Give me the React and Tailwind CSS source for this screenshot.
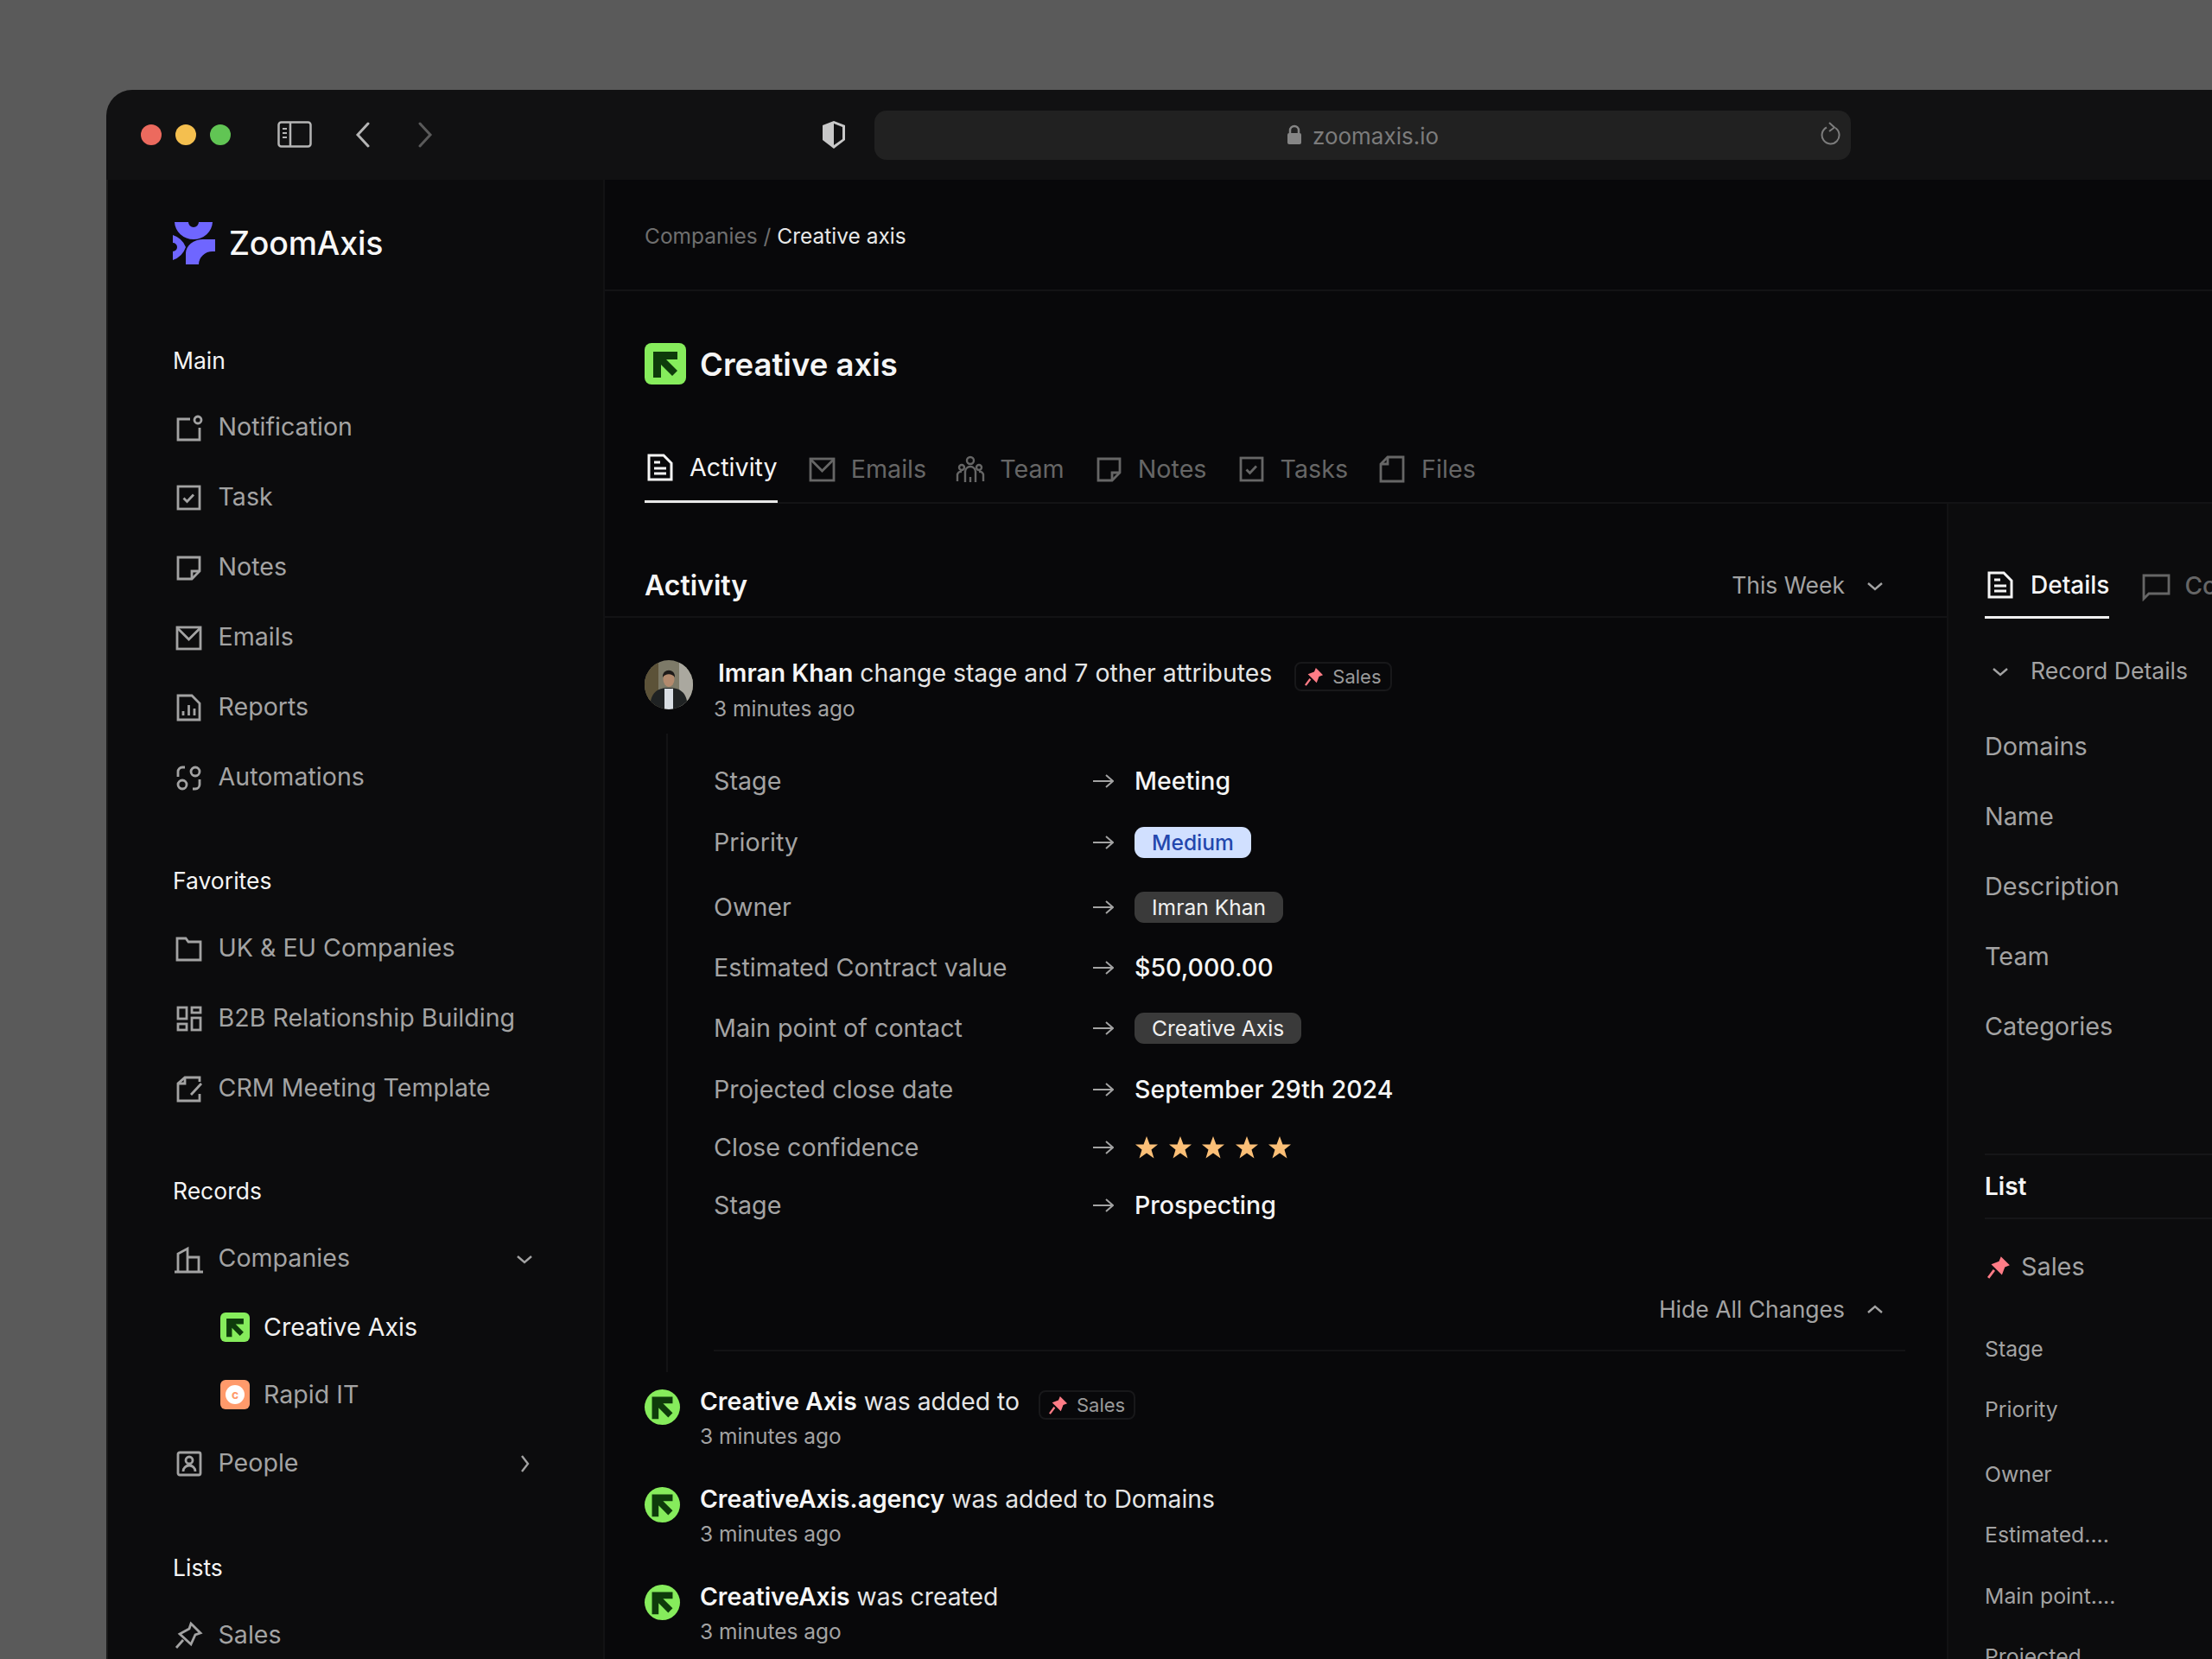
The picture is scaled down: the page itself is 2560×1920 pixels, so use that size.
import React from 'react'

const Svg = ({ size = 36, vb = 36, className = '', sw = 2.8, children }) => (
  <svg width={size} height={size} viewBox={`0 0 ${vb} ${vb}`} fill="none" stroke="currentColor" strokeWidth={sw} className={`shrink-0 ${className}`}>
    {children}
  </svg>
)

const NotificationIcon = () => <Svg><path d="M20 8H6V32H31V18" /><circle cx="29" cy="9" r="4" /></Svg>
const TaskIcon = ({ className }) => <Svg className={className}><rect x="6" y="5" width="25" height="26" /><path d="M12.5 18.5L16.5 22.5L24 14.5" /></Svg>
const NotesIcon = ({ className }) => <Svg className={className}><path d="M6 6H31V22L22 31H6Z" /><path d="M31 22H22V31" /></Svg>
const MailIcon = ({ className }) => <Svg className={className}><rect x="5" y="6" width="27" height="25" /><path d="M5.5 7L18.5 20L31.5 7" /></Svg>
const ReportsIcon = () => <Svg><path d="M6 4H22L31 13V32H6Z" /><path d="M12 27V22M18.500 27V15M25 27V19" /></Svg>
const AutomationIcon = () => <Svg><circle cx="26" cy="11" r="5" /><circle cx="11" cy="26" r="5" /><path d="M6 17V11A5 5 0 0 1 11 6H14" /><path d="M31 20V26A5 5 0 0 1 26 31H23" /></Svg>
const FolderIcon = () => <Svg><path d="M5 6H15L18 10H32V31H5Z" /></Svg>
const BoardIcon = () => <Svg><rect x="6" y="5" width="10" height="13" /><rect x="22" y="5" width="10" height="6" /><rect x="6" y="24" width="10" height="7" /><rect x="22" y="17" width="10" height="14" /></Svg>
const TemplateIcon = () => <Svg><path d="M31 10V5H14L6 12V32H31V24" /><path d="M14 5V12H6" /><path d="M21 25L33 12" /></Svg>
const BuildingIcon = () => <Svg><path d="M6 33V12L17 6V33" /><path d="M17 16H30V33" /><path d="M2 33H35" /></Svg>
const PeopleIcon = () => <Svg><rect x="6" y="5" width="26" height="26" rx="2" /><circle cx="19" cy="14" r="4" /><path d="M12 27A7 7 0 0 1 26 27" /></Svg>
const PinIcon = () => <Svg><path d="M21 4L32 15L26 17L21 28L8 16L19 10Z" /><path d="M12 23L4 32" /></Svg>
const DocIcon = ({ className }) => <Svg className={className} sw={3}><path d="M5 4H22L31 13V32H5Z" /><path d="M11 12H18M11 19H25M11 25H25" /></Svg>
const TeamIcon = ({ className }) => (
  <Svg className={className} sw={2.4}>
    <circle cx="18" cy="8" r="4" /><circle cx="8" cy="16" r="3" /><circle cx="28" cy="16" r="3" />
    <path d="M12 33V21A6 6 0 0 1 24 21V33" /><path d="M3 32V24A4.500 4.500 0 0 1 8 21" /><path d="M33 32V24A4.500 4.500 0 0 0 28 21" /><path d="M18 27V33" />
  </Svg>
)
const FileIcon = ({ className }) => <Svg className={className}><path d="M13 4H31V32H5V12Z" /><path d="M13 4V12H5" /></Svg>
const ChatIcon = ({ className }) => <Svg className={className}><path d="M4 6H33V27H10L4 33Z" /></Svg>

const ChevronDown = ({ up, className = 'text-[#a3a3a3]' }) => (
  <Svg size={22} vb={22} sw={2.4} className={className}><path d={up ? 'M3 14L11 7L19 14' : 'M3 8L11 15L19 8'} /></Svg>
)
const ChevronRight = () => <Svg size={22} vb={22} sw={2.4} className="text-[#a3a3a3]"><path d="M8 2L15 11L8 20" /></Svg>
const Arrow = () => (
  <Svg size={24} vb={24} sw={2} className="text-[#a3a3a3]"><path d="M0 12H23M15 5L23 12L15 19" /></Svg>
)
const Star = () => (
  <svg width="28" height="28" viewBox="0 0 28 28" className="shrink-0 fill-[#fbbf77]">
    <polygon points="14,1 17.500,10.500 27,10.500 19.500,16.500 22.500,26.500 14,20.500 5.500,26.500 8.500,16.500 1,10.500 10.500,10.500" />
  </svg>
)
const RedPin = ({ size = 22 }) => (
  <svg width={size} height={size} viewBox="0 0 24 24" className="shrink-0 fill-[#ff7c86]">
    <path d="M14 1L23 10L18 12L15 20L4 9L12 6Z" />
    <path d="M7 15L1 23" stroke="#ff7c86" strokeWidth="2.500" fill="none" />
  </svg>
)

const AxisMark = ({ size = 24 }) => (
  <svg width={size} height={size} viewBox="0 0 24 24" className="fill-[#0e3b0b]">
    <polygon points="5,5 19,5 19,9.500 12.500,9.500 19,16 16,19 9.500,12.500 9.500,20 5,20" />
  </svg>
)

const AxisSquare = ({ size, rounded }) => (
  <div className={`flex items-center justify-center bg-[#86ec5c] shrink-0 ${rounded}`} style={{ width: size, height: size }}>
    <AxisMark size={size} />
  </div>
)

const AxisCircle = () => (
  <div className="flex items-center justify-center w-[41px] h-[41px] rounded-full bg-[#86ec5c] shrink-0">
    <AxisMark size={41} />
  </div>
)

const Logo = () => (
  <svg width="49" height="49" viewBox="0 0 49 49" className="shrink-0 fill-[#6f66ff]">
    <path d="M2 0H18A6 6 0 0 0 30 0H46A22 21 0 0 1 24 20A22 21 0 0 1 2 0Z" />
    <path d="M49 20V34H46A16 15 0 0 0 30 49H15V36A20 16 0 0 1 35 20Z" />
    <path d="M0 15A24 24 0 0 1 15 29A24 24 0 0 1 0 44V34A5 5 0 0 0 0 24Z" />
  </svg>
)

const SectionLabel = ({ className, children }) => (
  <div className={`h-[40px] flex items-center text-[26.500px] text-[#f5f5f5] ${className}`}>{children}</div>
)

const NavItem = ({ icon: Icon, label, right }) => (
  <div className="h-[81px] flex items-center gap-[16.500px] text-[28.600px] text-[#a3a3a3]">
    <Icon />
    <span>{label}</span>
    {right && <span className="ml-auto flex">{right}</span>}
  </div>
)

const mainNav = [
  { icon: NotificationIcon, label: 'Notification' },
  { icon: TaskIcon, label: 'Task' },
  { icon: NotesIcon, label: 'Notes' },
  { icon: MailIcon, label: 'Emails' },
  { icon: ReportsIcon, label: 'Reports' },
  { icon: AutomationIcon, label: 'Automations' },
]

const favorites = [
  { icon: FolderIcon, label: 'UK & EU Companies' },
  { icon: BoardIcon, label: 'B2B Relationship Building' },
  { icon: TemplateIcon, label: 'CRM Meeting Template' },
]

const Sidebar = () => (
  <aside className="w-[577px] shrink-0 bg-[#0c0c0d] border-l-2 border-r-2 border-l-[#1a1a1a] border-r-[#121214] pl-[75px] pr-[80px]">
    <div className="flex items-center gap-[16px] h-[49px] mt-[49px]">
      <Logo />
      <span className="text-[37.500px] font-medium text-[#f7f7f7] tracking-[-0.2px] mt-[1px]">ZoomAxis</span>
    </div>

    <SectionLabel className="mt-[92px]">Main</SectionLabel>
    <div className="mt-[16px]">
      {mainNav.map((item) => <NavItem key={item.label} {...item} />)}
    </div>

    <SectionLabel className="mt-[60px]">Favorites</SectionLabel>
    <div className="mt-[17px]">
      {favorites.map((item) => <NavItem key={item.label} {...item} />)}
    </div>

    <SectionLabel className="mt-[59px]">Records</SectionLabel>
    <div className="mt-[17px]">
      <NavItem icon={BuildingIcon} label="Companies" right={<ChevronDown />} />
      <div className="h-[78px] flex items-center gap-[16px] pl-[55px] text-[28.600px] text-[#f0f0f0]">
        <AxisSquare size={34} rounded="rounded-[6px]" />
        Creative Axis
      </div>
      <div className="h-[78px] flex items-center gap-[16px] pl-[55px] text-[28.600px] text-[#a3a3a3]">
        <div className="w-[34px] h-[34px] rounded-[6px] bg-[#ff9a6b] flex items-center justify-center shrink-0">
          <div className="w-[22px] h-[22px] rounded-full bg-white flex items-center justify-center text-[14px] font-bold leading-none text-[#ff9a6b]">c</div>
        </div>
        Rapid IT
      </div>
      <NavItem icon={PeopleIcon} label="People" right={<ChevronRight />} />
    </div>

    <SectionLabel className="mt-[61px]">Lists</SectionLabel>
    <div className="mt-[17px]">
      <NavItem icon={PinIcon} label="Sales" />
    </div>
  </aside>
)

const tabs = [
  { icon: MailIcon, label: 'Emails' },
  { icon: TeamIcon, label: 'Team' },
  { icon: NotesIcon, label: 'Notes' },
  { icon: TaskIcon, label: 'Tasks' },
  { icon: FileIcon, label: 'Files' },
]

const SalesChip = ({ className }) => (
  <span className={`inline-flex items-center gap-[10px] h-[34px] px-[10px] rounded-[8px] border-2 border-[#18181a] text-[22px] text-[#9a9a9a] ${className}`}>
    <RedPin />
    Sales
  </span>
)

const Tag = ({ className, children }) => (
  <span className={`inline-flex items-center h-[36px] px-[20px] rounded-[11px] text-[24.600px] ${className}`}>{children}</span>
)

const Value = ({ children }) => <span className="text-[28.500px] font-medium text-[#f5f5f5]">{children}</span>

const changes = [
  { label: 'Stage', mt: 'mt-0', value: <Value>Meeting</Value> },
  { label: 'Priority', mt: 'mt-[11px]', value: <Tag className="bg-[#d1e0ff] text-[#2447ad] font-medium">Medium</Tag> },
  { label: 'Owner', mt: 'mt-[15px]', value: <Tag className="bg-[#3a3a3a] text-[#f0f0f0]">Imran Khan</Tag> },
  { label: 'Estimated Contract value', mt: 'mt-[10px]', value: <Value>$50,000.00</Value> },
  { label: 'Main point of contact', mt: 'mt-[10px]', value: <Tag className="bg-[#3a3a3a] text-[#f0f0f0]">Creative Axis</Tag> },
  { label: 'Projected close date', mt: 'mt-[11px]', value: <Value>September 29th 2024</Value> },
  {
    label: 'Close confidence',
    mt: 'mt-[7px]',
    value: (
      <span className="flex gap-[10.500px]">
        <Star /><Star /><Star /><Star /><Star />
      </span>
    ),
  },
  { label: 'Stage', mt: 'mt-[7px]', value: <Value>Prospecting</Value> },
]

const events = [
  { name: 'Creative Axis', rest: 'was added to', chip: true },
  { name: 'CreativeAxis.agency', rest: 'was added to Domains' },
  { name: 'CreativeAxis', rest: 'was created' },
]

const Avatar = () => (
  <svg width="56" height="57" viewBox="0 0 56 57" className="shrink-0 rounded-full">
    <rect width="56" height="57" fill="#7d7a68" />
    <rect x="0" y="0" width="16" height="57" fill="#5c5238" />
    <rect x="40" y="0" width="16" height="57" fill="#aaa89f" />
    <path d="M6 57C6 36 16 32 28 32C40 32 50 36 50 57Z" fill="#1f2223" />
    <path d="M23 57V33H33V57Z" fill="#d9dee3" />
    <ellipse cx="28" cy="22" rx="6.500" ry="9" fill="#b38a6d" />
    <path d="M21 20C20 9 36 9 35 20C32 15 24 15 21 20Z" fill="#1d1a18" />
  </svg>
)

const ActivityColumn = () => (
  <div className="w-[1553px] shrink-0">
    <div className="h-[132px] border-b-2 border-[#131315] pl-[46px] pr-[72px] pt-[74px] flex justify-between items-center">
      <span className="text-[32px] font-semibold text-[#f5f5f5] -mt-[14px]">Activity</span>
      <span className="flex items-center gap-[24px] text-[26.500px] text-[#a3a3a3] -mt-[14px]">
        This Week
        <ChevronDown />
      </span>
    </div>

    <div className="pl-[46px] pr-[48px]">
      <div className="flex items-start gap-[24px] mt-[49px]">
        <Avatar />
        <div className="-mt-[5px]">
          <div className="h-[40px] flex items-center ml-[5px] text-[28.400px] text-[#e5e5e5] whitespace-nowrap">
            <span className="font-semibold text-[#f5f5f5]">Imran Khan</span>
            <span className="ml-[8px]">change stage and 7 other attributes</span>
            <SalesChip className="ml-[26px] mt-[8px]" />
          </div>
          <div className="h-[36px] flex items-center mt-[3px] text-[24.500px] text-[#a3a3a3]">3 minutes ago</div>
        </div>
      </div>

      <div className="ml-[25px] mt-[11px] border-l-2 border-[#131315] pl-[53px] pt-[25px] pb-[24px]">
        {changes.map((row, i) => (
          <div key={i} className={`h-[60px] flex items-center ${row.mt}`}>
            <span className="w-[439px] text-[28.700px] text-[#a3a3a3]">{row.label}</span>
            <span className="w-[48px] flex"><Arrow /></span>
            {row.value}
          </div>
        ))}
        <div className="h-[40px] mt-[71px] pr-[24px] flex items-center justify-end gap-[24px] text-[26.500px] text-[#a3a3a3]">
          Hide All Changes
          <ChevronDown up />
        </div>
        <div className="h-[2px] mt-[26px] bg-[#131315]" />
      </div>

      <div className="mt-[20px]">
        {events.map((ev) => (
          <div key={ev.name} className="h-[113px] flex items-start gap-[23px]">
            <AxisCircle />
            <div className="-mt-[6px]">
              <div className="h-[40px] flex items-center text-[28.300px] text-[#e5e5e5] whitespace-nowrap">
                <span className="font-semibold text-[#f5f5f5]">{ev.name}</span>
                <span className="ml-[8px]">{ev.rest}</span>
                {ev.chip && <SalesChip className="ml-[22px] mt-[8px]" />}
              </div>
              <div className="h-[36px] flex items-center mt-[2px] text-[24.500px] text-[#a3a3a3]">3 minutes ago</div>
            </div>
          </div>
        ))}
      </div>
    </div>
  </div>
)

const recordFields = ['Domains', 'Name', 'Description', 'Team', 'Categories']

const listFields = [
  { label: 'Stage', mt: 'mt-0' },
  { label: 'Priority', mt: 'mt-[30px]' },
  { label: 'Owner', mt: 'mt-[35px]' },
  { label: 'Estimated....', mt: 'mt-[30px]' },
  { label: 'Main point....', mt: 'mt-[31px]' },
  { label: 'Projected....', mt: 'mt-[30px]' },
]

const DetailsPanel = () => (
  <div className="flex-1 min-w-0 bg-[#0c0c0d] border-l-2 border-[#121214] pl-[42px] overflow-hidden">
    <div className="h-[133px] flex items-end gap-[36px] whitespace-nowrap text-[28px] font-medium">
      <div className="flex items-center gap-[17px] h-[90px] pt-[14px] border-b-[3px] border-[#f0f0f0] text-[#f5f5f5]">
        <DocIcon />
        Details
      </div>
      <div className="flex items-center gap-[15px] h-[90px] pt-[14px] text-[#666]">
        <ChatIcon />
        Comments
      </div>
    </div>

    <div className="h-[40px] mt-[41px] flex items-center gap-[24px] pl-[7px] text-[26.600px] text-[#a3a3a3] whitespace-nowrap">
      <ChevronDown />
      Record Details
    </div>
    <div className="mt-[26px]">
      {recordFields.map((f) => (
        <div key={f} className="h-[81px] flex items-center text-[28.800px] text-[#a3a3a3]">{f}</div>
      ))}
    </div>

    <div className="mt-[107px] h-[76px] flex items-center border-y-2 border-[#161618] text-[28px] font-semibold text-[#f5f5f5]">List</div>
    <div className="h-[40px] mt-[35px] flex items-center gap-[12px] pl-[3px] text-[28.800px] text-[#a3a3a3]">
      <RedPin size={27} />
      Sales
    </div>
    <div className="mt-[56px]">
      {listFields.map((f) => (
        <div key={f.label} className={`h-[40px] flex items-center text-[24.800px] text-[#a3a3a3] whitespace-nowrap ${f.mt}`}>{f.label}</div>
      ))}
    </div>
  </div>
)

const TitleBar = () => (
  <div className="h-[104px] shrink-0 bg-[#111112] flex items-center">
    <div className="flex items-center gap-[16px] ml-[40px]">
      <span className="w-[24px] h-[24px] rounded-full bg-[#ec6a5e]" />
      <span className="w-[24px] h-[24px] rounded-full bg-[#f4bf4f]" />
      <span className="w-[24px] h-[24px] rounded-full bg-[#61c554]" />
    </div>
    <svg width="40" height="32" viewBox="0 0 40 32" fill="none" stroke="#b5b5b5" strokeWidth="2.500" className="ml-[54px] shrink-0">
      <rect x="1.500" y="1.500" width="37" height="28" rx="3" />
      <path d="M15 2V30" />
      <path d="M6 9H11M6 14H11M6 19H11" strokeWidth="2" />
    </svg>
    <svg width="18" height="30" viewBox="0 0 18 30" fill="none" stroke="#b5b5b5" strokeWidth="3" strokeLinecap="round" className="ml-[50px] shrink-0">
      <path d="M15 2L3 15L15 28" />
    </svg>
    <svg width="18" height="30" viewBox="0 0 18 30" fill="none" stroke="#5a5a5a" strokeWidth="3" strokeLinecap="round" className="ml-[54px] shrink-0">
      <path d="M3 2L15 15L3 28" />
    </svg>
    <svg width="30" height="34" viewBox="0 0 30 34" className="ml-[449px] shrink-0">
      <path d="M15 1L28 6V23L15 33L2 23V6Z" fill="#c8c8c8" />
      <path d="M15 4L25 8V22L15 29Z" fill="#111112" />
    </svg>
    <div className="relative ml-[32px] w-[1130px] h-[57px] rounded-[14px] bg-[#212121] flex items-center justify-center gap-[12px] text-[26px] text-[#7c7c7c]">
      <svg width="18" height="24" viewBox="0 0 18 24" className="shrink-0">
        <path d="M4 11V7A5 5 0 0 1 14 7V11" fill="none" stroke="#858585" strokeWidth="2.500" />
        <rect x="1" y="10" width="16" height="13" rx="2" fill="#858585" />
      </svg>
      <span className="mt-[3px]">zoomaxis.io</span>
      <svg width="24" height="28" viewBox="0 0 24 28" fill="none" stroke="#7c7c7c" strokeWidth="2" className="absolute right-[12px] top-[13px]">
        <path d="M18 7A10 10 0 1 1 8 6.500" />
        <path d="M11 1L17 6.500L11 11" />
      </svg>
    </div>
  </div>
)

export default function App() {
  return (
    <div className="w-[2560px] h-[1920px] overflow-hidden bg-[#5a5a5a] pt-[104px] pl-[123px] [font-family:Inter,sans-serif]">
      <div className="w-[2437px] h-[1816px] rounded-tl-[30px] overflow-hidden flex flex-col">
        <TitleBar />
        <div className="flex-1 min-h-0 flex">
          <Sidebar />
          <main className="flex-1 min-w-0 bg-[#08080a]">
            <div className="h-[129px] border-b-2 border-[#131315] pl-[46px] flex items-center text-[24.500px] text-[#6f6f6f]">
              <span className="mt-[4px]">Companies /&nbsp;<span className="text-[#e8e8e8]">Creative axis</span></span>
            </div>
            <div className="flex items-center gap-[16px] pl-[46px] mt-[60px] h-[48px]">
              <AxisSquare size={48} rounded="rounded-[8px]" />
              <span className="text-[36.500px] font-semibold text-[#f5f5f5] mt-[2px]">Creative axis</span>
            </div>
            <div className="ml-[46px] mt-[58px] h-[80px] border-b-2 border-[#131315] flex gap-[33px] text-[28.700px]">
              <div className="h-[79px] flex items-center gap-[16px] border-b-[3px] border-[#e8e8e8] text-[#f5f5f5]">
                <DocIcon />
                Activity
              </div>
              {tabs.map(({ icon: Icon, label }) => (
                <div key={label} className="h-[79px] flex items-center gap-[16px] text-[#666]">
                  <Icon />
                  {label}
                </div>
              ))}
            </div>
            <div className="flex">
              <ActivityColumn />
              <DetailsPanel />
            </div>
          </main>
        </div>
      </div>
    </div>
  )
}
